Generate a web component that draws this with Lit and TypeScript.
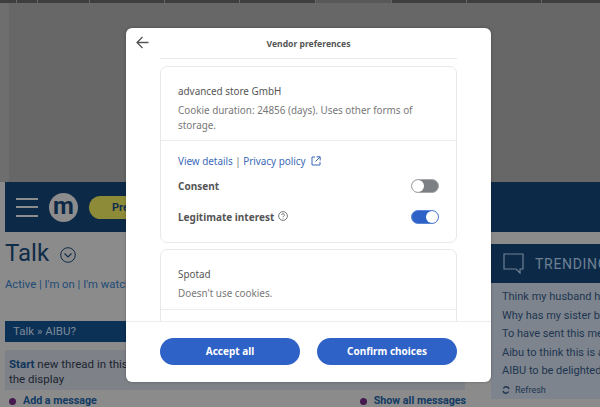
import { LitElement, html, css } from "lit";
import { customElement } from "lit/decorators.js";

const trending = [
  "Think my husband has been cheating on me",
  "Why has my sister booked this without asking",
  "To have sent this message to my friend today",
  "Aibu to think this is a bit much really now",
  "AIBU to be delighted about all of this news",
];
const strips = [16, 20, 51, 74, 74, 75, 75, 74, 74, 58];

@customElement("app-root")
export class AppRoot extends LitElement {
  static styles = css`
    :host { display: block; position: relative; width: 600px; height: 407px; overflow: hidden; background: #8b8b8b; font-family: "Noto Sans", sans-serif; }
    .page { width: 600px; height: 407px; display: flex; flex-direction: column; overflow: hidden; font-family: Roboto, sans-serif; }
    .strips { height: 3px; display: flex; gap: 1px; background: #666; flex: none; }
    .strips span { background: #3e3e3e; height: 3px; }
    .strips span.light { background: #585858; }
    .hero { height: 179px; flex: none; background: linear-gradient(90deg, #6e6e6e 0 9px, #676767 9px); }
    .bar { height: 50px; flex: none; margin-left: 5px; background: #0c2a47; display: flex; align-items: center; gap: 11px; padding-left: 11px; }
    .burger { width: 22px; display: flex; flex-direction: column; gap: 6.5px; }
    .burger i { display: block; height: 2px; background: #8d8d8d; }
    .logo { width: 29px; height: 29px; border-radius: 50%; background: #8c8c8c; color: #0c2a47; font: 700 24px/26px Roboto, sans-serif; text-align: center; }
    .pill { width: 120px; height: 23px; border-radius: 12px; background: #8e8b38; color: #10304d; font: 700 11px/23px Roboto, sans-serif; padding-left: 23px; box-sizing: border-box; }
    .cols { flex: 1; display: grid; grid-template-columns: 491px 109px; min-height: 0; }
    .main { padding: 5px 0 0 5px; min-width: 0; color: #0f2c48; }
    .title { display: flex; align-items: center; gap: 11px; font-size: 24px; line-height: 32px; height: 32px; color: #0f2c48; }
    .title svg { margin-top: 3px; }
    .tabs { margin-top: 8px; font-size: 11.3px; line-height: 16px; color: #1e4a76; white-space: nowrap; }
    .crumb { margin-top: 28px; height: 21px; background: #0c3156; color: #7c8a9a; font-size: 11.5px; line-height: 21px; padding-left: 8px; }
    .note { margin-top: 8px; width: 460px; height: 40px; background: #7e8188; padding: 7px 4px 0; box-sizing: border-box; font-size: 11.5px; line-height: 15px; color: #1b2430; }
    .note b { color: #10355a; font-weight: 700; }
    .actions { margin-top: 3px; display: flex; justify-content: space-between; width: 461px; font-size: 10.7px; font-weight: 700; color: #123a63; line-height: 16px; padding-left: 4px; box-sizing: border-box; white-space: nowrap; }
    .act { display: flex; align-items: center; gap: 7px; }
    .dot { width: 7px; height: 7px; border-radius: 50%; background: #441a4e; }
    .side { margin-top: 12px; min-width: 0; overflow: hidden; }
    .shead { height: 39px; background: #0c2a47; display: flex; align-items: center; gap: 11px; padding-left: 12px; color: #6f8094; font-size: 14px; letter-spacing: .7px; white-space: nowrap; }
    .shead svg { flex: none; }
    .slist { background: #7d848d; height: 98px; padding: 5px 0 0 11px; box-sizing: border-box; font-size: 11px; line-height: 18.6px; color: #1e3550; white-space: nowrap; overflow: hidden; }
    .refresh { display: flex; align-items: center; gap: 5px; font-size: 9px; line-height: 18px; color: #1e3550; padding-left: 11px; background: #7d848d; }
    .modal { position: absolute; left: 126px; top: 28px; width: 365px; height: 354px; background: #fff; border-radius: 6px; box-shadow: 0 0 3px rgba(0,0,0,.3); display: flex; flex-direction: column; overflow: hidden; color: #555; }
    .mhead { height: 30px; flex: none; display: flex; align-items: center; position: relative; justify-content: center; padding-top: 1px; font-size: 8.6px; font-weight: 700; color: #555; box-sizing: border-box; }
    .back { position: absolute; left: 10px; top: 8px; }
    .body { flex: 1; min-height: 0; overflow: hidden; padding: 0 34px; }
    .prev { height: 1px; background: #e9e9ec; width: 297px; }
    .card { border: 1px solid #e8e8ec; border-radius: 7px; margin-top: 7px; width: 297px; box-sizing: border-box; }
    .card.first { height: 177px; }
    .top { padding: 16px 17px 0; height: 74px; box-sizing: border-box; border-bottom: 1px solid #ececef; }
    .name { font-size: 9.9px; line-height: 16px; color: #555; }
    .desc { margin-top: 4px; font-size: 9.9px; line-height: 15px; color: #777; }
    .links { padding: 12px 17px 0; font-size: 9.9px; line-height: 16px; display: flex; align-items: center; gap: 2.5px; color: #3a68b8; }
    .links em { font-style: normal; color: #777; }
    .links svg { margin-left: 3px; }
    .row { display: flex; align-items: center; justify-content: space-between; padding: 0 17px; font-size: 10px; font-weight: 700; color: #555; height: 16px; }
    .row.a { margin-top: 9px; }
    .row.b { margin-top: 15px; }
    .label { display: flex; align-items: center; gap: 4px; }
    .label svg { margin-bottom: 2px; }
    .toggle { width: 28px; height: 14px; border-radius: 8px; background: #7c8084; position: relative; box-sizing: border-box; border: 1px solid #a5a7a9; }
    .toggle::after { content: ""; position: absolute; left: 0; top: 0; width: 12px; height: 12px; border-radius: 50%; background: #fff; }
    .toggle.on { background: #2f62c6; border-color: #5b85d6; }
    .toggle.on::after { left: auto; right: 0; }
    .card.second { margin-top: 6px; height: 120px; }
    .top2 { padding: 16px 17px 0; height: 60px; box-sizing: border-box; border-bottom: 1px solid #ececef; }
    .foot { height: 61px; flex: none; border-top: 1px solid #ececef; display: flex; gap: 17px; padding: 16px 34px 0; box-sizing: border-box; }
    .btn { flex: 1; height: 27px; border-radius: 14px; background: #2f62c6; color: #fff; font-size: 10px; font-weight: 700; line-height: 27px; text-align: center; }
  `;

  render() {
    return html`
      <div class="page">
        <div class="strips">${strips.map((w, i) => html`<span class=${i === 6 ? "light" : ""} style="width:${w}px"></span>`)}</div>
        <div class="hero"></div>
        <div class="bar">
          <div class="burger"><i></i><i></i><i></i></div>
          <div class="logo">m</div>
          <div class="pill">Pre</div>
        </div>
        <div class="cols">
          <div class="main">
            <div class="title">Talk
              <svg width="16" height="16" viewBox="0 0 16 16" fill="none" stroke="#0f2c48" stroke-width="1"><circle cx="8" cy="8" r="7.3"/><path d="M4.5 6.5 8 10l3.5-3.5" stroke-width="1.2"/></svg>
            </div>
            <div class="tabs">Active | I'm on | I'm watching</div>
            <div class="crumb">Talk » AIBU?</div>
            <div class="note"><b>Start</b> new thread in this topic<br>the display</div>
            <div class="actions">
              <span class="act"><i class="dot"></i>Add a message</span>
              <span class="act"><i class="dot"></i>Show all messages</span>
            </div>
          </div>
          <div class="side">
            <div class="shead">
              <svg width="21" height="21" viewBox="0 0 21 21" fill="none" stroke="#6f8094" stroke-width="1.2"><path d="M1 1h19v15h-3v4l-4-4H1z"/></svg>
              TRENDING
            </div>
            <div class="slist">${trending.map((t) => html`<div>${t}</div>`)}</div>
            <div class="refresh">
              <svg width="8" height="8" viewBox="0 0 8 8" fill="none" stroke="#1e3550" stroke-width="1.4"><path d="M7 3A3 3 0 0 0 1.4 2.5M1 5a3 3 0 0 0 5.6.5"/></svg>
              Refresh
            </div>
          </div>
        </div>
      </div>

      <div class="modal">
        <div class="mhead">
          <svg class="back" width="13" height="13" viewBox="0 0 13 13" fill="none" stroke="#555" stroke-width="1.3"><path d="M12.5 6.5H1M6.5 1 1 6.5 6.5 12"/></svg>
          Vendor preferences
        </div>
        <div class="body">
          <div class="prev"></div>
          <div class="card first">
            <div class="top">
              <div class="name">advanced store GmbH</div>
              <div class="desc">Cookie duration: 24856 (days). Uses other forms of storage.</div>
            </div>
            <div class="links">
              <span>View details</span><em>|</em><span>Privacy policy</span>
              <svg width="10" height="10" viewBox="0 0 10 10" fill="none" stroke="#3a68b8" stroke-width="1"><path d="M4 1H1v8h8V6M5.5 .8h3.7v3.7M9 1 4.5 5.5"/></svg>
            </div>
            <div class="row a"><span>Consent</span><span class="toggle"></span></div>
            <div class="row b">
              <span class="label">Legitimate interest
                <svg width="10" height="10" viewBox="0 0 10 10" fill="none" stroke="#555" stroke-width=".8"><circle cx="5" cy="5" r="4.4"/><path d="M3.6 4a1.4 1.4 0 1 1 2 1.3c-.4.2-.6.4-.6.9M5 7v.6"/></svg>
              </span>
              <span class="toggle on"></span>
            </div>
          </div>
          <div class="card second">
            <div class="top2">
              <div class="name">Spotad</div>
              <div class="desc">Doesn't use cookies.</div>
            </div>
          </div>
        </div>
        <div class="foot">
          <div class="btn">Accept all</div>
          <div class="btn">Confirm choices</div>
        </div>
      </div>
    `;
  }
}
